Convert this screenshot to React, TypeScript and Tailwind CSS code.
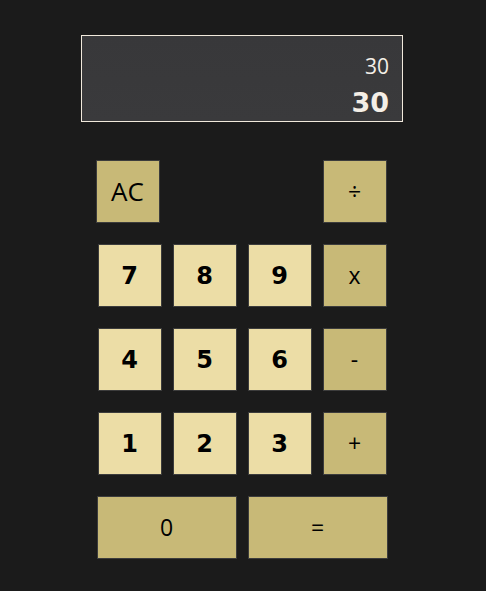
import React from "react";

const digit =
  "h-[63px] w-[64px] border border-[#3c3c3c] bg-[#ecdda6] text-[24px] font-bold text-black flex items-center justify-center";
const op =
  "h-[63px] w-[64px] border border-[#3c3c3c] bg-[#c8b977] text-[23px] font-normal text-black flex items-center justify-center font-['Open_Sans',sans-serif]";
const wide =
  "h-[63px] w-[140px] border border-[#3c3c3c] bg-[#c8b977] text-[23px] font-normal text-black flex items-center justify-center font-['Open_Sans',sans-serif]";

export default function App() {
  return (
    <div
      className="min-h-[591px] w-full bg-[#1b1b1b] flex flex-col items-center pt-[35px]"
      style={{ fontFamily: "'DejaVu Sans', 'Open Sans', sans-serif" }}
    >
      <div className="ml-[-2px] h-[87px] w-[322px] border border-[#f1e9dc] bg-gradient-to-b from-[#38383a] to-[#3a3a3c] flex flex-col items-end justify-end pr-[13px] pb-[1px]">
        <div className="mb-[7px] text-[21px] leading-[26px] font-normal text-[#f4efe8] font-['Open_Sans',sans-serif]">30</div>
        <div className="text-[27px] leading-[34px] font-bold text-[#f4eee6]">30</div>
      </div>
      <div className="mt-[38px] grid grid-cols-[64px_64px_64px_64px] gap-x-[11px] gap-y-[21px] ml-[-2px]">
        <button className={op + " ml-[-2px] text-[26px]"}>AC</button>
        <div />
        <div />
        <button className={op}>÷</button>
        <button className={digit}>7</button>
        <button className={digit}>8</button>
        <button className={digit}>9</button>
        <button className={op}>x</button>
        <button className={digit}>4</button>
        <button className={digit}>5</button>
        <button className={digit}>6</button>
        <button className={op}>-</button>
        <button className={digit}>1</button>
        <button className={digit}>2</button>
        <button className={digit}>3</button>
        <button className={op}>+</button>
        <button className={wide + " col-span-2 ml-[-1px]"}>0</button>
        <button className={wide + " col-span-2"}>=</button>
      </div>
    </div>
  );
}
